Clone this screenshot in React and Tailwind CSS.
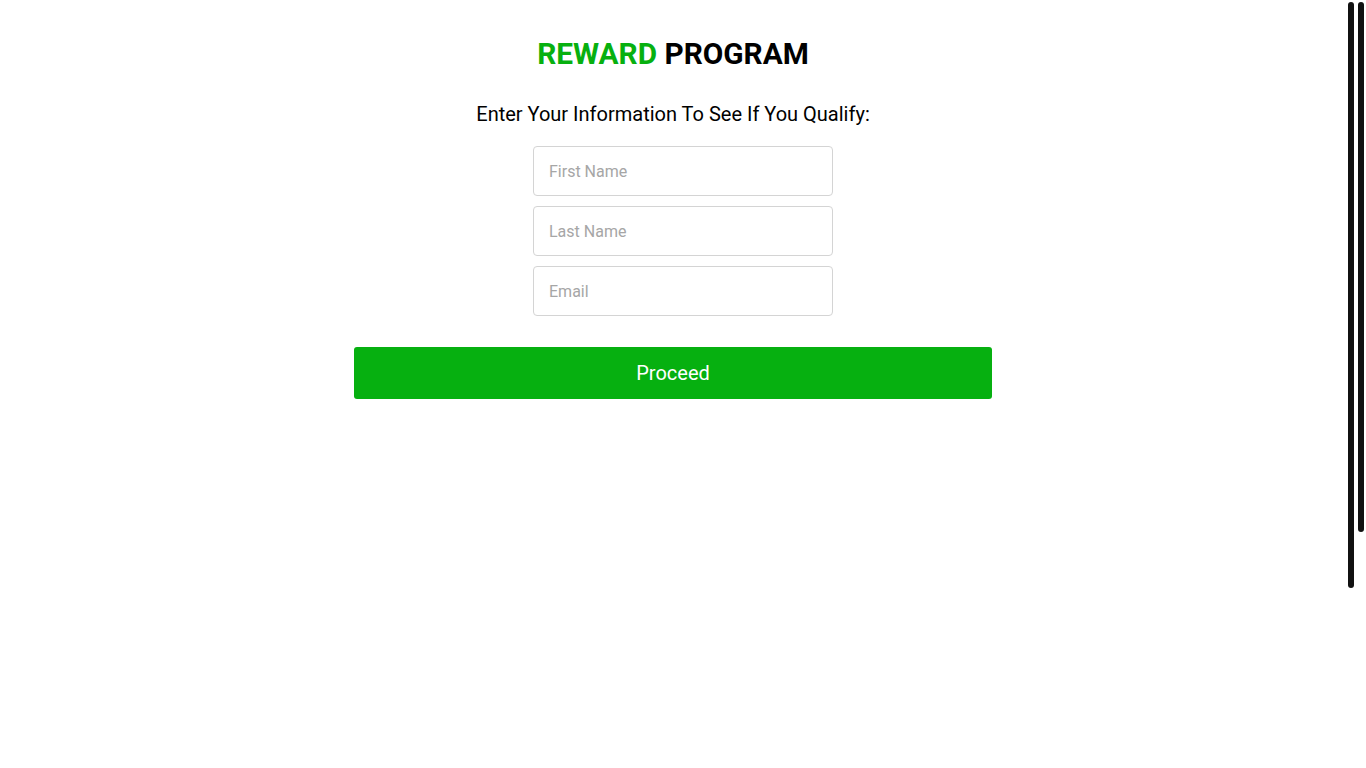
import React from 'react';

const fields = ['First Name', 'Last Name', 'Email'];

const App = () => {
  return (
    <div className="relative min-h-screen bg-white" style={{ fontFamily: 'Roboto, "Liberation Sans", sans-serif' }}>
      <div className="w-[1346px] flex flex-col items-center pt-[36px]">
        <h1 className="text-[29.8px] leading-[36px] font-bold text-black">
          <span className="text-[#07b00f]">REWARD</span> PROGRAM
        </h1>

        <p className="mt-[30px] text-[20px] leading-[24px] text-black">
          Enter Your Information To See If You Qualify:
        </p>

        <form className="flex flex-col items-center mt-[20px]" onSubmit={(e) => e.preventDefault()}>
          <div className="flex flex-col gap-[10px] pl-[20px]">
            {fields.map((f) => (
              <input
                key={f}
                type="text"
                placeholder={f}
                className="w-[300px] h-[50px] px-[15px] border border-[#d4d4d4] rounded-[4px] text-[16px] text-black placeholder:text-[#a6a6a6] outline-none"
              />
            ))}
          </div>
          <button
            type="submit"
            className="mt-[31px] w-[638px] h-[52px] bg-[#06b010] rounded-[3px] text-white text-[20px]"
          >
            Proceed
          </button>
        </form>
      </div>

      {/* overlay scroll bars */}
      <div className="absolute left-[1348px] top-[2px] w-[6px] h-[586px] rounded-full bg-[#111111]" />
      <div className="absolute left-[1358px] top-[2px] w-[6px] h-[530px] rounded-full bg-[#111111]" />
    </div>
  );
};

export default App;
